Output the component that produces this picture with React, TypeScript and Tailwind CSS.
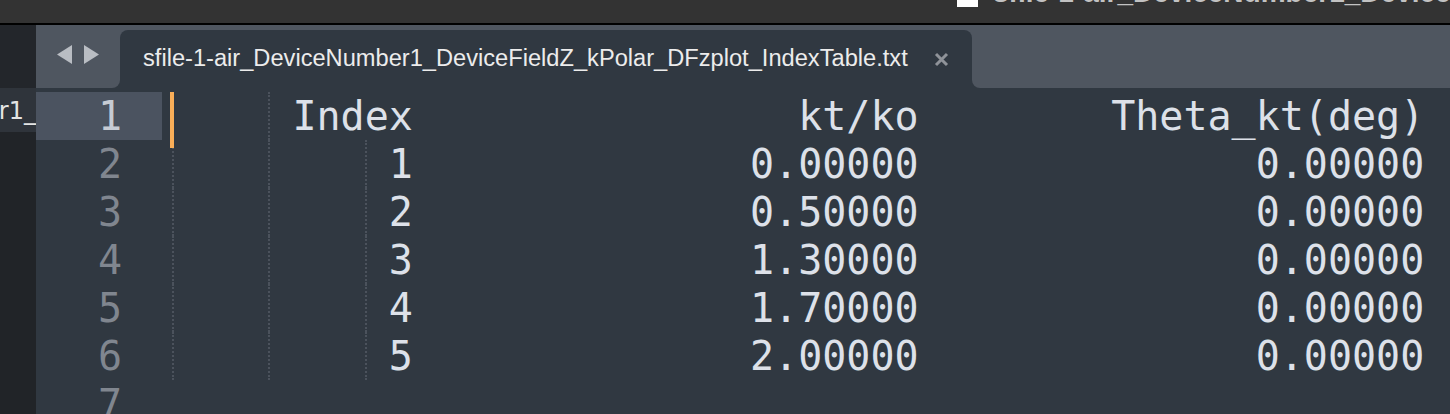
import React from "react";

const FILE = "sfile-1-air_DeviceNumber1_DeviceFieldZ_kPolar_DFzplot_IndexTable.txt";

const ROWS = [
  ["1", "0.00000", "0.00000"],
  ["2", "0.50000", "0.00000"],
  ["3", "1.30000", "0.00000"],
  ["4", "1.70000", "0.00000"],
  ["5", "2.00000", "0.00000"],
];

function Guide({ wide = true }: { wide?: boolean }) {
  return (
    <span
      className={
        (wide ? "w-[4ch]" : "w-[1ch]") +
        " inline-block h-[48px] align-top border-l-2 border-dotted border-[#4b525c]"
      }
    />
  );
}

function Line({
  n,
  active,
  children,
}: {
  n: number;
  active?: boolean;
  children?: React.ReactNode;
}) {
  return (
    <div className="flex h-[48px] leading-[48px]">
      <div
        className={
          "w-[126px] shrink-0 pr-[40px] text-right " +
          (active ? "bg-[#4b5360] text-[#c6cbd4]" : "text-[#80868f]")
        }
      >
        {n}
      </div>
      <div className="w-[10px] shrink-0" />
      <div className="relative flex-1 whitespace-pre text-[#dde1e9]">
        {children}
        {active && (
          <span className="absolute left-[-2px] top-0 z-10 h-[56px] w-[4px] bg-[#f9ae58]" />
        )}
      </div>
    </div>
  );
}

export default function App() {
  return (
    <div className="flex h-[414px] w-[1450px] flex-col overflow-hidden bg-[#303841]">
      {/* window title bar, mostly scrolled out of view */}
      <div className="flex h-[25px] shrink-0 overflow-hidden border-b-2 border-black bg-[#333333]">
        <div className="w-[957px] shrink-0" />
        <div className="relative mt-[-12px] h-[19px] w-[21px] shrink-0 bg-white">
          <span className="absolute left-[6px] top-[8px] h-[4px] w-[4px] bg-[#f39a2b]" />
        </div>
        <div
          className="ml-[15px] mt-[-21px] whitespace-nowrap text-[28px] font-bold leading-none text-[#c2c2c2]"
          style={{ fontFamily: '"Liberation Sans", Arial, sans-serif' }}
        >
          {FILE}
        </div>
      </div>

      {/* tab strip */}
      <div className="flex h-[63px] shrink-0 bg-[#303841]">
        <div className="w-[36px] shrink-0 bg-[#23262b]" />
        <div className="flex w-[84px] shrink-0 items-center gap-[12px] rounded-br-lg bg-[#4f5660] pb-[5px] pl-[21px]">
          <svg width="15" height="19" viewBox="0 0 15 19">
            <polygon points="15,0 15,19 0,9.5" fill="#b9bdc3" />
          </svg>
          <svg width="15" height="19" viewBox="0 0 15 19">
            <polygon points="0,0 0,19 15,9.5" fill="#b9bdc3" />
          </svg>
        </div>
        <div className="w-[852px] shrink-0 bg-[#4f5660] pt-[5px]">
          <div
            className="flex h-full items-center rounded-t-lg bg-[#303841] pl-[23px] text-[23.65px] text-[#ececec]"
            style={{ fontFamily: '"Liberation Sans", Arial, sans-serif' }}
          >
            <span className="whitespace-nowrap">{FILE}</span>
            <svg className="ml-[26px]" width="15" height="15" viewBox="0 0 15 15">
              <path d="M2 2 L13 13 M13 2 L2 13" stroke="#8f9399" strokeWidth="3" />
            </svg>
          </div>
        </div>
        <div className="flex-1 rounded-bl-lg bg-[#4f5660]" />
      </div>

      {/* editor */}
      <div className="flex flex-1">
        <div className="w-[36px] shrink-0 bg-[#212428]">
          <div
            className="flex h-[44px] items-center justify-end overflow-hidden whitespace-nowrap bg-[#2f343b] pt-[2px] text-[24px] text-[#e4e4e4]"
            style={{ fontFamily: '"DejaVu Sans", sans-serif' }}
          >
            DeviceNumber1_
          </div>
        </div>
        <div
          className="flex-1 pt-[4px] text-[40px]"
          style={{ fontFamily: '"DejaVu Sans Mono", monospace' }}
        >
          <Line n={1} active>
            <Guide />
            <Guide wide={false} />
            {"Index                kt/ko        Theta_kt(deg)"}
          </Line>
          {ROWS.map((r, i) => (
            <Line key={r[0]} n={i + 2}>
              <Guide />
              <Guide />
              <Guide wide={false} />
              {r[0] + "              " + r[1] + "              " + r[2]}
            </Line>
          ))}
          <Line n={7} />
        </div>
      </div>
    </div>
  );
}
